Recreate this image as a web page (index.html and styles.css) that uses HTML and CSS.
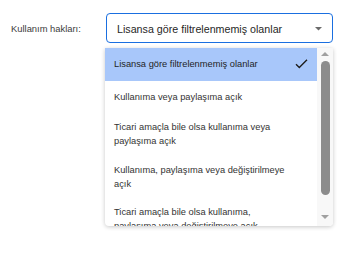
FILE: index.html
```html
<!DOCTYPE html>
<html lang="tr">
<head>
<meta charset="utf-8">
<link rel="stylesheet" href="styles.css">
</head>
<body>
<div class="field">
  <label class="label">Kullanım hakları:</label>
  <div class="select-wrap">
    <div class="select">
      <span class="select-text">Lisansa göre filtrelenmemiş olanlar</span>
      <svg class="caret" width="7" height="4" viewBox="0 0 7 4"><path d="M0 0H7L3.5 3.5Z" fill="#6b6b6b"/></svg>
    </div>
    <div class="menu">
      <ul class="options">
        <li class="opt selected"><span class="opt-text">Lisansa göre filtrelenmemiş olanlar</span>
          <svg class="check" width="13" height="10" viewBox="0 0 13 10"><path d="M1 5.2L4.3 8.5L12 0.8" fill="none" stroke="#1f1f1f" stroke-width="1.4"/></svg>
        </li>
        <li class="opt"><span class="opt-text">Kullanıma veya paylaşıma açık</span></li>
        <li class="opt"><span class="opt-text">Ticari amaçla bile olsa kullanıma veya paylaşıma açık</span></li>
        <li class="opt"><span class="opt-text">Kullanıma, paylaşıma veya değiştirilmeye açık</span></li>
        <li class="opt"><span class="opt-text">Ticari amaçla bile olsa kullanıma, paylaşıma veya değiştirilmeye açık</span></li>
      </ul>
      <div class="scrollbar">
        <div class="sb-btn"><span class="tri-up"></span></div>
        <div class="thumb"></div>
        <div class="sb-space"></div>
        <div class="sb-btn sb-down"><span class="tri-down"></span></div>
      </div>
    </div>
  </div>
</div>
</body>
</html>
```

FILE: styles.css
```css
* { box-sizing: border-box; }
html, body { margin: 0; padding: 0; background: #fff; }
body {
  font-family: "Liberation Sans", Arial, sans-serif;
  width: 349px;
  height: 262px;
  overflow: hidden;
}
.field {
  display: flex;
  align-items: center;
  padding: 13px 0 0 11px;
}
.label {
  width: 95px;
  font-size: 9.4px;
  color: #3c3c3c;
  padding-top: 1px;
}
.select-wrap {
  position: relative;
}
.select {
  width: 227px;
  height: 30px;
  border: 1px solid #1a6fe0;
  border-radius: 4px;
  display: flex;
  align-items: center;
  justify-content: space-between;
  padding: 1px 10px 0 10px;
  font-size: 10.7px;
  color: #1f1f1f;
}
.caret { display: block; margin-top: 0px; }
.menu {
  position: absolute;
  top: 35px;
  left: -1px;
  width: 228px;
  height: 178px;
  background: #fff;
  border-radius: 0 0 4px 4px;
  box-shadow: 0 1px 4px rgba(0,0,0,0.22);
  display: flex;
  overflow: hidden;
}
.options {
  list-style: none;
  margin: 0;
  padding: 0;
  flex: 1;
  overflow: hidden;
}
.opt {
  display: flex;
  align-items: center;
  min-height: 32.5px;
  padding: 7.25px 9px 7.25px 9px;
  font-size: 9.3px;
  line-height: 14px;
  color: #333;
}
.opt-text {
  flex: 1;
  padding-right: 19px;
}
.selected {
  background: #a8c7fa;
  color: #1f1f1f;
}
.selected .opt-text { padding-right: 0; }
.check { display: block; margin-top: 0px; }
.scrollbar {
  width: 16px;
  background: #f8f8f8;
  display: flex;
  flex-direction: column;
  align-items: center;
  padding-bottom: 2px;
}
.sb-btn {
  height: 12px;
  width: 16px;
  display: flex;
  align-items: center;
  justify-content: center;
}
.sb-down { height: 14px; }
.tri-up {
  width: 0; height: 0;
  border-left: 4px solid transparent;
  border-right: 4px solid transparent;
  border-bottom: 4px solid #a0a0a0;
}
.tri-down {
  width: 0; height: 0;
  border-left: 4px solid transparent;
  border-right: 4px solid transparent;
  border-top: 4px solid #a0a0a0;
}
.thumb {
  margin-top: 1px;
  width: 9px;
  height: 134px;
  border-radius: 4.5px;
  background: #8c8c8c;
}
.sb-space { flex: 1; }
```
